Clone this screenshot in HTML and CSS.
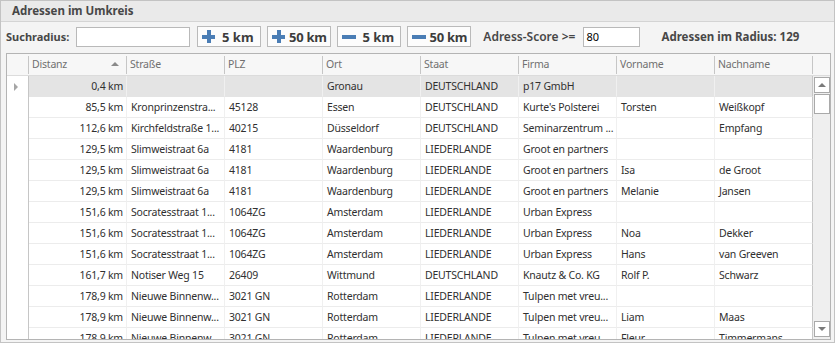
FILE: index.html
```html
<!DOCTYPE html>
<html lang="de">
<head>
    <meta charset="UTF-8">
    <title>Adressen im Umkreis</title>
    <link rel="stylesheet" href="styles.css">
</head>
<body>
    <div class="panel">
        <div class="panel-title">Adressen im Umkreis</div>

        <div class="toolbar">
            <span class="label">Suchradius:</span>
            <input type="text" class="radius-input">
            <button class="km-btn"><span class="icon-plus"></span><span class="btn-text">5 km</span></button>
            <button class="km-btn"><span class="icon-plus"></span><span class="btn-text tight">50 km</span></button>
            <button class="km-btn"><span class="icon-minus"></span><span class="btn-text">5 km</span></button>
            <button class="km-btn"><span class="icon-minus"></span><span class="btn-text tight">50 km</span></button>
            <span class="label score-label">Adress-Score &gt;=</span>
            <input type="text" class="score-input" value="80">
            <span class="label count-label">Adressen im Radius: 129</span>
        </div>

        <div class="grid">
            <div class="grid-head">
                <div class="hcell indicator"></div>
                <div class="hcell sorted">Distanz <span class="sort-up"></span></div>
                <div class="hcell">Straße</div>
                <div class="hcell">PLZ</div>
                <div class="hcell">Ort</div>
                <div class="hcell">Staat</div>
                <div class="hcell">Firma</div>
                <div class="hcell">Vorname</div>
                <div class="hcell">Nachname</div>
                <div class="hcell filler"></div>
            </div>
            <div class="grid-body">
                <div class="rows" id="rows"></div>
                <div class="vscroll">
                    <div class="sb-btn"><span class="arrow-up"></span></div>
                    <div class="sb-thumb"></div>
                    <div class="sb-track"></div>
                    <div class="sb-btn"><span class="arrow-down"></span></div>
                </div>
            </div>
        </div>
    </div>

    <script>
        // Anzeige wie im Grid (lange Texte bereits gekuerzt)
        const addresses = [
            ['0,4 km', '', '', 'Gronau', 'DEUTSCHLAND', 'p17 GmbH', '', ''],
            ['85,5 km', 'Kronprinzenstra...', '45128', 'Essen', 'DEUTSCHLAND', "Kurte's Polsterei", 'Torsten', 'Weißkopf'],
            ['112,6 km', 'Kirchfeldstraße 1...', '40215', 'Düsseldorf', 'DEUTSCHLAND', 'Seminarzentrum ...', '', 'Empfang'],
            ['129,5 km', 'Slimweistraat 6a', '4181', 'Waardenburg', 'LIEDERLANDE', 'Groot en partners', '', ''],
            ['129,5 km', 'Slimweistraat 6a', '4181', 'Waardenburg', 'LIEDERLANDE', 'Groot en partners', 'Isa', 'de Groot'],
            ['129,5 km', 'Slimweistraat 6a', '4181', 'Waardenburg', 'LIEDERLANDE', 'Groot en partners', 'Melanie', 'Jansen'],
            ['151,6 km', 'Socratesstraat 1...', '1064ZG', 'Amsterdam', 'LIEDERLANDE', 'Urban Express', '', ''],
            ['151,6 km', 'Socratesstraat 1...', '1064ZG', 'Amsterdam', 'LIEDERLANDE', 'Urban Express', 'Noa', 'Dekker'],
            ['151,6 km', 'Socratesstraat 1...', '1064ZG', 'Amsterdam', 'LIEDERLANDE', 'Urban Express', 'Hans', 'van Greeven'],
            ['161,7 km', 'Notiser Weg 15', '26409', 'Wittmund', 'DEUTSCHLAND', 'Knautz & Co. KG', 'Rolf P.', 'Schwarz'],
            ['178,9 km', 'Nieuwe Binnenw...', '3021 GN', 'Rotterdam', 'LIEDERLANDE', 'Tulpen met vreu...', '', ''],
            ['178,9 km', 'Nieuwe Binnenw...', '3021 GN', 'Rotterdam', 'LIEDERLANDE', 'Tulpen met vreu...', 'Liam', 'Maas'],
            ['178,9 km', 'Nieuwe Binnenw...', '3021 GN', 'Rotterdam', 'LIEDERLANDE', 'Tulpen met vreu...', 'Fleur', 'Timmermans']
        ];

        const rows = document.getElementById('rows');
        addresses.forEach((entry, index) => {
            const row = document.createElement('div');
            row.className = index === 0 ? 'row selected' : 'row';
            const ind = document.createElement('div');
            ind.className = 'cell indicator';
            if (index === 0) {
                ind.innerHTML = '<span class="arrow-right"></span>';
            }
            row.appendChild(ind);
            entry.forEach((value, col) => {
                const cell = document.createElement('div');
                cell.className = col === 0 ? 'cell num' : 'cell';
                cell.textContent = value;
                row.appendChild(cell);
            });
            rows.appendChild(row);
        });
    </script>
</body>
</html>
```

FILE: styles.css
```css
body {
    margin: 0;
    font-family: "Noto Sans", "Open Sans", sans-serif;
    font-size: 10.5px;
    letter-spacing: -0.2px;
    color: #303030;
    background: #fff;
}

.panel {
    width: 835px;
    height: 343px;
    box-sizing: border-box;
    border: 1px solid #c3c3c3;
    background: #f4f4f4;
    display: flex;
    flex-direction: column;
}

.panel-title {
    height: 21px;
    box-sizing: border-box;
    border-bottom: 1px solid #d4d4d4;
    background: #eaeaea;
    padding-left: 11px;
    font-size: 11.5px;
    font-weight: bold;
    letter-spacing: 0;
    line-height: 20px;
    color: #474747;
}

.toolbar {
    height: 31px;
    display: flex;
    align-items: center;
    padding-left: 5px;
    padding-bottom: 2px;
    box-sizing: border-box;
    letter-spacing: 0;
}

.label {
    font-weight: bold;
    font-size: 11px;
    color: #474747;
}

.radius-input,
.score-input {
    height: 20px;
    box-sizing: border-box;
    border: 1px solid #b9b9b9;
    background: #fff;
    font-family: inherit;
    font-size: 11px;
    padding: 0 2px;
    margin: 0;
}

.radius-input {
    width: 114px;
    margin-left: 7px;
    margin-right: 7px;
}

.km-btn {
    width: 64px;
    height: 21px;
    box-sizing: border-box;
    border: 1px solid #bababa;
    background: #fcfcfc;
    margin: 0 6px 0 0;
    padding: 0 0 0 4px;
    display: flex;
    align-items: center;
    cursor: pointer;
}

.icon-plus {
    width: 13px;
    height: 13px;
    position: relative;
    flex-shrink: 0;
}

.icon-plus::before,
.icon-plus::after {
    content: "";
    position: absolute;
    background: #4a7db5;
}

.icon-plus::before {
    left: 0;
    top: 5px;
    width: 13px;
    height: 4px;
}

.icon-plus::after {
    left: 5px;
    top: 0;
    width: 4px;
    height: 13px;
}

.icon-minus {
    width: 14px;
    height: 4px;
    background: #4a7db5;
    flex-shrink: 0;
}

.btn-text {
    flex: 1;
    text-align: center;
    font-family: "Noto Sans", sans-serif;
    font-weight: bold;
    font-size: 13px;
    color: #3c3c3c;
}

.btn-text.tight {
    letter-spacing: -0.3px;
}

.score-label {
    margin-left: 6px;
    font-size: 12px;
    font-weight: 600;
}

.score-input {
    width: 57px;
    margin-left: 8px;
}

.count-label {
    margin-left: 21px;
    font-size: 11.5px;
}

.grid {
    height: 287px;
    margin: 0 3px 2px 5px;
    box-sizing: border-box;
    border: 1px solid #b4b4b4;
    background: #fff;
    display: flex;
    flex-direction: column;
    overflow: hidden;
}

.grid-head {
    display: grid;
    grid-template-columns: 22px repeat(8, 98px) 17px;
    height: 22px;
    box-sizing: border-box;
    background: #f7f7f7;
    border-bottom: 1px solid #dcdcdc;
}

.hcell {
    position: relative;
    padding-left: 3px;
    line-height: 20px;
    color: #707070;
    white-space: nowrap;
}

.hcell::after {
    content: "";
    position: absolute;
    right: 0;
    top: 2px;
    bottom: 1px;
    width: 1px;
    background: #c6c6c6;
}

.hcell.filler::after {
    display: none;
}

.sort-up {
    position: absolute;
    right: 8px;
    top: 8px;
    border-left: 4px solid transparent;
    border-right: 4px solid transparent;
    border-bottom: 4px solid #8a8a8a;
}

.grid-body {
    flex: 1;
    display: flex;
    min-height: 0;
}

.rows {
    width: 806px;
}

.row {
    display: grid;
    grid-template-columns: 22px repeat(8, 98px);
    height: 21px;
}

.cell {
    box-sizing: border-box;
    border-right: 1px solid #f0f0f0;
    border-bottom: 1px solid #ececec;
    padding: 0 2px 0 4px;
    line-height: 20px;
    white-space: nowrap;
    overflow: hidden;
}

.cell.indicator {
    border-right: 1px solid #c6c6c6;
    border-bottom: none;
    background: #fff;
    position: relative;
}

.cell:last-child {
    border-right: 1px solid #c6c6c6;
}

.cell.num {
    text-align: right;
    padding-right: 3px;
}

.row.selected .cell {
    background: #e4e4e4;
    border-bottom-color: #e4e4e4;
}

.row.selected .cell.indicator {
    background: #fff;
}

.arrow-right {
    position: absolute;
    left: 7px;
    top: 7px;
    border-top: 4px solid transparent;
    border-bottom: 4px solid transparent;
    border-left: 4px solid #a6a6a6;
}

.vscroll {
    width: 17px;
    background: #efefef;
    display: flex;
    flex-direction: column;
    padding: 1px 0 2px 1px;
    box-sizing: border-box;
}

.sb-btn,
.sb-thumb {
    width: 16px;
    box-sizing: border-box;
    border: 1px solid #a9a9a9;
    background: #fff;
}

.sb-btn {
    height: 16px;
    display: flex;
    align-items: center;
    justify-content: center;
}

.sb-thumb {
    height: 20px;
    margin-top: 1px;
}

.sb-track {
    flex: 1;
}

.arrow-up {
    border-left: 4px solid transparent;
    border-right: 4px solid transparent;
    border-bottom: 4px solid #7a7a7a;
}

.arrow-down {
    border-left: 4px solid transparent;
    border-right: 4px solid transparent;
    border-top: 4px solid #7a7a7a;
}
```
